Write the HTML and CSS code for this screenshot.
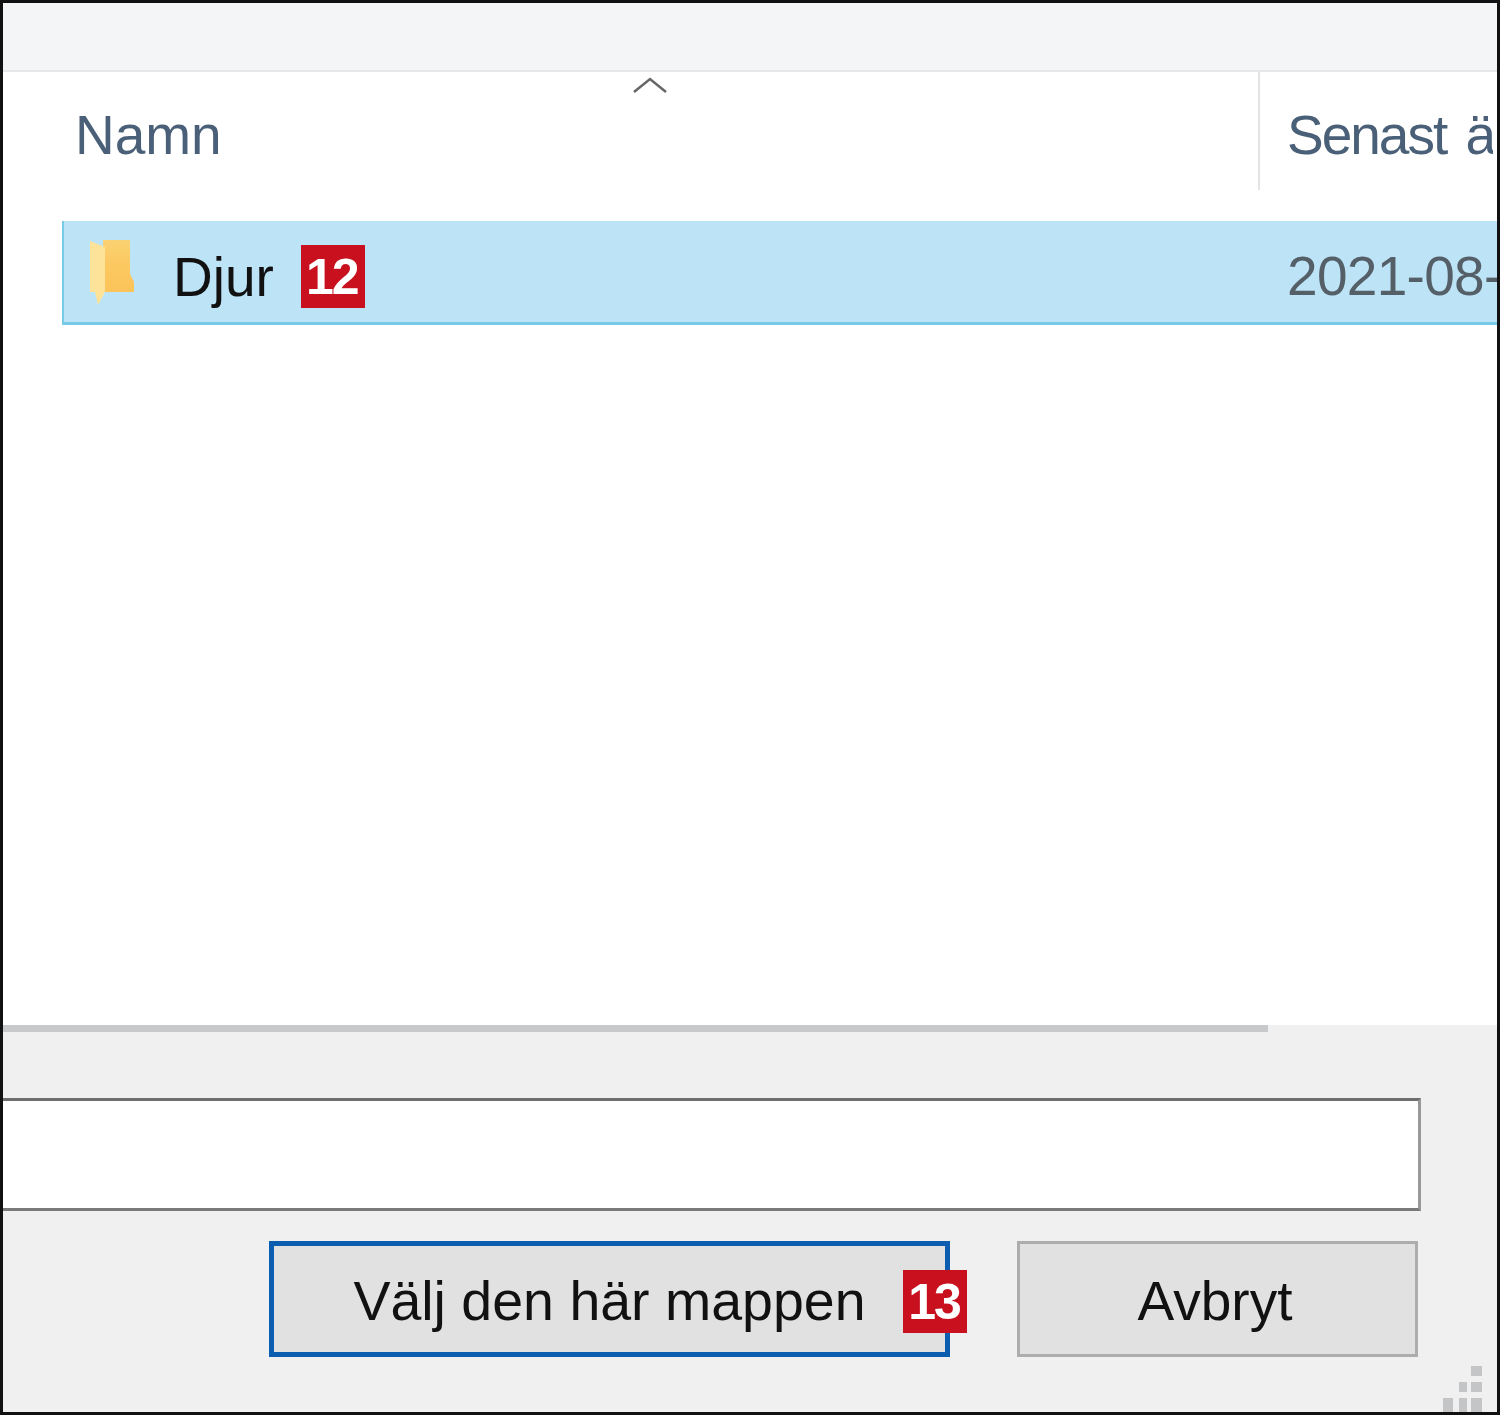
FILE: index.html
```html
<!DOCTYPE html>
<html lang="sv">
<head>
<meta charset="utf-8">
<title>Välj mapp</title>
<link rel="stylesheet" href="styles.css">
</head>
<body>
<div class="window">
  <div class="toolbar"></div>
  <div class="list">
    <div class="header">
      <div class="col-name">
        <span class="head-label">Namn</span>
        <svg class="sort" viewBox="0 0 34 16" aria-hidden="true"><polyline points="1,15 17,2 33,15"/></svg>
      </div>
      <div class="col-date"><span class="head-label head-label-tight">Senast ändrad</span></div>
    </div>
    <div class="row">
      <div class="row-name">
        <svg class="folder" viewBox="0 0 46 66" aria-hidden="true">
          <defs>
            <linearGradient id="folder-shade" x1="0" y1="0" x2="0" y2="1">
              <stop offset="0" stop-color="#fad272"/>
              <stop offset="0.5" stop-color="#fcc860"/>
              <stop offset="1" stop-color="#fbc45a"/>
            </linearGradient>
          </defs>
          <path fill="url(#folder-shade)" d="M3 0H41V34L45 42V52H14V0Z"/>
          <path class="folder-flap" d="M1 1L16 7V52L9 65L6 52H1Z"/>
        </svg>
        <span class="file-name">Djur</span>
        <span class="badge">12</span>
      </div>
      <div class="row-date">2021-08-12 10:24</div>
    </div>
  </div>
  <div class="footer">
    <div class="scrollbar"></div>
    <div class="field"></div>
    <div class="actions">
      <button class="btn btn-primary">Välj den här mappen<span class="badge badge-over">13</span></button>
      <button class="btn btn-cancel">Avbryt</button>
    </div>
    <svg class="grip" viewBox="0 0 40 46" aria-hidden="true">
      <rect x="28" y="0" width="11" height="10"/>
      <rect x="16" y="16" width="8" height="10"/><rect x="28" y="16" width="11" height="10"/>
      <rect x="0" y="32" width="10" height="14"/><rect x="16" y="32" width="8" height="14"/><rect x="28" y="32" width="11" height="14"/>
    </svg>
  </div>
</div>
</body>
</html>
```
FILE: styles.css
```css
* { box-sizing: border-box; }
html, body { margin: 0; padding: 0; }
body {
  width: 1500px;
  height: 1415px;
  background: #000;
  font-family: "Liberation Sans", Arial, sans-serif;
  font-size: 55px;
  overflow: hidden;
}
.window {
  width: 1500px;
  height: 1415px;
  border: 3px solid #111;
  background: #fff;
  display: flex;
  flex-direction: column;
  overflow: hidden;
  filter: blur(0.7px);
}
.toolbar {
  height: 69px;
  flex: none;
  background: #f4f5f6;
  border-bottom: 2px solid #e6e7e8;
}
.list {
  flex: 1;
  min-height: 0;
  display: flex;
  flex-direction: column;
}
.header {
  display: flex;
  height: 118px;
  flex: none;
}
.col-name {
  position: relative;
  width: 1257px;
  flex: none;
  padding: 8px 0 0 72px;
  border-right: 2px solid #e3e4e5;
  display: flex;
  align-items: center;
}
.col-date {
  flex: 1;
  margin-right: 4px;
  padding: 8px 0 0 27px;
  display: flex;
  align-items: center;
  white-space: nowrap;
  overflow: hidden;
}
.head-label { color: #4a6078; }
.head-label-tight {
  letter-spacing: -2px;
  word-spacing: 6px;
}
.sort {
  position: absolute;
  left: 630px;
  top: 5px;
  width: 34px;
  height: 16px;
  fill: none;
  stroke: #666;
  stroke-width: 2.5;
}
.row {
  display: flex;
  height: 104px;
  margin: 31px 0 0 59px;
  background: #bde3f6;
  border-left: 2px solid #78cbe8;
  border-bottom: 3px solid #78cbe8;
  white-space: nowrap;
  overflow: hidden;
}
.row-name {
  width: 1196px;
  flex: none;
  display: flex;
  align-items: center;
  padding: 10px 0 0 25px;
}
.folder {
  width: 46px;
  height: 66px;
  flex: none;
  margin-right: 38px;
  margin-bottom: 8px;
}
.folder-flap { fill: #fde39a; }
.file-name { color: #111; margin-right: 27px; }
.row-date {
  padding: 8px 0 0 27px;
  display: flex;
  align-items: center;
  color: #555f68;
  letter-spacing: -0.7px;
}
.badge {
  display: inline-flex;
  align-items: center;
  justify-content: center;
  width: 64px;
  height: 63px;
  background: #c8101f;
  color: #fff;
  font-size: 50px;
  font-weight: 700;
  letter-spacing: -2px;
  padding-right: 2px;
}
.footer {
  position: relative;
  height: 387px;
  flex: none;
  background: #f0f0f0;
  display: flex;
  flex-direction: column;
}
.scrollbar {
  width: 1265px;
  height: 7px;
  flex: none;
  background: #c8c9cb;
}
.field {
  height: 113px;
  flex: none;
  margin: 66px 76px 0 0;
  background: #fff;
  border: 3px solid #7a7a7a;
  border-left: 0;
  border-top-color: #6e6e6e;
  border-right-color: #999;
}
.actions {
  display: flex;
  justify-content: flex-end;
  gap: 67px;
  margin: 30px 79px 0 0;
}
.btn {
  position: relative;
  width: 401px;
  height: 116px;
  padding: 4px 0 0;
  background: #e1e1e1;
  border: 3px solid #adadad;
  border-radius: 0;
  color: #111;
  font: inherit;
  white-space: nowrap;
}
.btn-primary {
  width: 681px;
  border: 5px solid #0b5db0;
  font-size: 55.5px;
}
.btn-cancel { padding-right: 5px; }
.badge-over {
  position: absolute;
  left: 629px;
  top: 24px;
}
.grip {
  position: absolute;
  right: 14px;
  bottom: 0;
  width: 40px;
  height: 46px;
  fill: #c4c5c6;
}
```
